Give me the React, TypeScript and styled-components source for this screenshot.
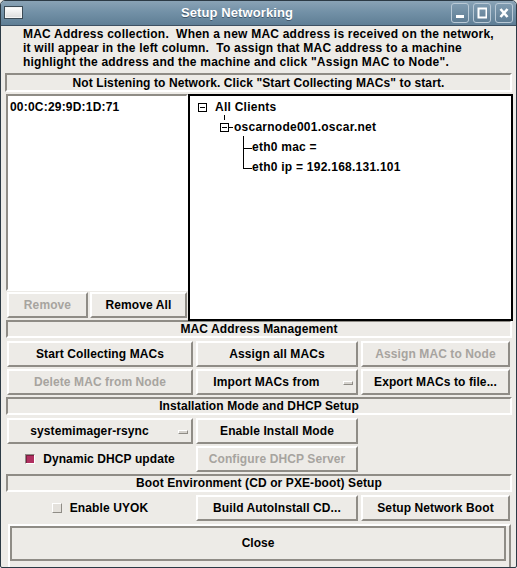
import React from "react";
import styled, { createGlobalStyle } from "styled-components";

const BG = "#edebe7";
const LIGHT = "#ffffff";
const SHADOW = "#8f8c86";
const DISABLED = "#a7a49f";
const FONT = `"Liberation Sans", Arial, Helvetica, sans-serif`;

const GlobalStyle = createGlobalStyle`
  html, body { margin: 0; padding: 0; background: ${BG}; }
  body { font-family: ${FONT}; }
  * { box-sizing: border-box; }
`;

const Window = styled.div`
  width: 517px;
  height: 568px;
  display: flex;
  flex-direction: column;
  background: ${BG};
  border: 1px solid #2c3a45;
  border-radius: 5px 5px 2px 2px;
  overflow: hidden;
`;

const TitleBar = styled.div`
  height: 25px;
  flex: none;
  display: flex;
  align-items: center;
  background: linear-gradient(#8aa3b6 0%, #7391a7 45%, #5f7e95 100%);
  border-bottom: 1px solid #3d5062;
  padding: 0 3px 0 3px;
`;

const AppIcon = styled.div`
  width: 19px;
  height: 13px;
  margin-top: -2px;
  border: 1px solid #3b4a55;
  background: linear-gradient(#ffffff, #dcdcdc);
  box-shadow: inset 0 0 0 1px #f4f4f4;
`;

const Title = styled.div`
  flex: 1;
  text-align: center;
  color: #ffffff;
  font: bold 13px ${FONT};
  letter-spacing: 0.1px;
  text-shadow: 0 1px 0 #3f566a;
  margin-top: -1px;
`;

const TitleButtons = styled.div`
  display: flex;
  gap: 4px;
  margin-top: -1px;
`;

const TitleButton = styled.div`
  width: 18px;
  height: 20px;
  border: 1px solid #b9c9d6;
  border-radius: 3px;
  background: linear-gradient(#7f9bb0, #5f7d94);
  display: flex;
  align-items: center;
  justify-content: center;
`;

const Body = styled.div`
  flex: 1;
  display: flex;
  flex-direction: column;
  padding: 0 3px 0 4px;
`;

const Intro = styled.div`
  margin: 1px 0 0 18px;
  font: bold 12px/14px ${FONT};
  letter-spacing: 0.22px;
  color: #000;
  white-space: pre;
`;

const Sunken = styled.div`
  border-style: solid;
  border-width: 2px;
  border-color: ${SHADOW} ${LIGHT} ${LIGHT} ${SHADOW};
`;

const StatusLabel = styled(Sunken)`
  margin: 4px 1px 0 0;
  height: 19px;
  display: flex;
  align-items: center;
  justify-content: center;
  font: bold 12px ${FONT};
  letter-spacing: 0.1px;
`;

const Middle = styled.div`
  margin-top: 1px;
  height: 227px;
  display: grid;
  grid-template-columns: 183px 1fr;
`;

const LeftColumn = styled.div`
  display: flex;
  flex-direction: column;
  padding: 1px 0 0 1px;
`;

const MacList = styled(Sunken)`
  height: 197px;
  background: #ffffff;
  padding: 4px 0 0 2px;
  font: bold 12px ${FONT};
  letter-spacing: 0.2px;
`;

const RemoveRow = styled.div`
  margin-top: 1px;
  display: grid;
  grid-template-columns: 81px 97px;
  gap: 2px;
  padding-left: 1px;
`;

const TreePanel = styled.div`
  position: relative;
  margin-top: 1px;
  height: 227px;
  border: 2px solid #000;
  background: #ffffff;
  padding-top: 1px;
`;

const TreeLines = styled.svg`
  position: absolute;
  left: 0;
  top: 0;
  pointer-events: none;
`;

const TreeRow = styled.div<{ $indent: number }>`
  height: 20px;
  display: flex;
  align-items: center;
  padding-left: ${(p) => p.$indent}px;
  font: bold 12px ${FONT};
  letter-spacing: 0.25px;
  white-space: pre;
`;

const SectionHeader = styled(Sunken)`
  margin: 0 1px 0 1px;
  height: 18px;
  display: flex;
  align-items: center;
  justify-content: center;
  font: bold 12px ${FONT};
  letter-spacing: 0.1px;
`;

const ButtonGrid = styled.div`
  display: grid;
  grid-template-columns: 186px 162px 149px;
  grid-auto-rows: 26px;
  column-gap: 3px;
  row-gap: 2px;
  margin: 3px 0 2px 2px;
`;

const Button = styled.div<{ $disabled?: boolean }>`
  height: 26px;
  background: ${BG};
  border-style: solid;
  border-width: 2px;
  border-color: ${LIGHT} ${SHADOW} ${SHADOW} ${LIGHT};
  display: flex;
  align-items: center;
  justify-content: center;
  font: bold 12px ${FONT};
  letter-spacing: 0.1px;
  color: ${(p) => (p.$disabled ? DISABLED : "#000")};
  white-space: nowrap;
`;

const MenuButton = styled(Button)`
  justify-content: flex-start;
  padding-right: 3px;
`;

const MenuText = styled.span`
  flex: 1;
  text-align: center;
`;

const MenuIndicator = styled.span`
  width: 10px;
  height: 4px;
  margin: 1px 0 0 8px;
  border-style: solid;
  border-width: 1px;
  border-color: ${LIGHT} ${SHADOW} ${SHADOW} ${LIGHT};
  background: #d6d3ce;
`;

const CheckCell = styled.div`
  display: flex;
  align-items: center;
  justify-content: center;
  gap: 8px;
  font: bold 12px ${FONT};
  letter-spacing: 0.1px;
`;

const CheckBox = styled.span<{ $checked?: boolean }>`
  width: 10px;
  height: 10px;
  border-style: solid;
  border-width: 1px;
  border-color: ${(p) =>
    p.$checked
      ? `${SHADOW} ${LIGHT} ${LIGHT} ${SHADOW}`
      : `${LIGHT} ${SHADOW} ${SHADOW} ${LIGHT}`};
  background: ${(p) => (p.$checked ? "#b03060" : "#e4e1dc")};
  box-shadow: ${(p) => (p.$checked ? `inset 1px 1px 0 #7a1f40` : "none")};
`;

const CloseRing = styled.div`
  margin: 1px 2px 0 3px;
  height: 45px;
  border-style: solid;
  border-width: 2px;
  border-color: ${LIGHT} ${SHADOW} ${SHADOW} ${LIGHT};
  padding: 0 3px 6px 0;
`;

const CloseButton = styled.div`
  height: 100%;
  border-style: solid;
  border-width: 2px;
  border-color: ${SHADOW};
  display: flex;
  align-items: center;
  justify-content: center;
  font: bold 12px ${FONT};
  padding-bottom: 1px;
`;

const Spacer = styled.div``;

const TreeDrawing = () => (
  <TreeLines width="321" height="100" viewBox="0 0 321 100">
    <g stroke="#000" strokeWidth="1" fill="none" shapeRendering="crispEdges">
      <rect x="8.5" y="7.5" width="8" height="8" fill="#fff" />
      <line x1="10" y1="11.5" x2="15" y2="11.5" />
      <line x1="34.5" y1="19" x2="34.5" y2="24" />
      <rect x="30.5" y="27.5" width="8" height="8" fill="#fff" />
      <line x1="32" y1="31.5" x2="37" y2="31.5" />
      <line x1="39" y1="31.5" x2="43" y2="31.5" />
      <line x1="53.5" y1="40" x2="53.5" y2="72" />
      <line x1="53" y1="52.5" x2="62" y2="52.5" />
      <line x1="53" y1="72.5" x2="62" y2="72.5" />
    </g>
  </TreeLines>
);

export default function App() {
  return (
    <>
      <GlobalStyle />
      <Window>
        <TitleBar>
          <AppIcon />
          <Title>Setup Networking</Title>
          <TitleButtons>
            <TitleButton>
              <svg width="10" height="12" viewBox="0 0 10 12">
                <rect x="1" y="8" width="8" height="3" fill="#fff" />
              </svg>
            </TitleButton>
            <TitleButton>
              <svg width="10" height="12" viewBox="0 0 10 12">
                <rect x="1.5" y="1.5" width="8" height="9" fill="none" stroke="#fff" strokeWidth="2" />
              </svg>
            </TitleButton>
            <TitleButton>
              <svg width="10" height="12" viewBox="0 0 10 12">
                <path d="M1.5 2 L8.5 10 M8.5 2 L1.5 10" stroke="#fff" strokeWidth="2.6" />
              </svg>
            </TitleButton>
          </TitleButtons>
        </TitleBar>
        <Body>
          <Intro>
            {"MAC Address collection.  When a new MAC address is received on the network,\nit will appear in the left column.  To assign that MAC address to a machine\nhighlight the address and the machine and click \"Assign MAC to Node\"."}
          </Intro>
          <StatusLabel>Not Listening to Network. Click "Start Collecting MACs" to start.</StatusLabel>
          <Middle>
            <LeftColumn>
              <MacList>00:0C:29:9D:1D:71</MacList>
              <RemoveRow>
                <Button $disabled>Remove</Button>
                <Button>Remove All</Button>
              </RemoveRow>
            </LeftColumn>
            <TreePanel>
              <TreeDrawing />
              <TreeRow $indent={25}>All Clients</TreeRow>
              <TreeRow $indent={44}>oscarnode001.oscar.net</TreeRow>
              <TreeRow $indent={62}>eth0 mac =</TreeRow>
              <TreeRow $indent={62}>eth0 ip = 192.168.131.101</TreeRow>
            </TreePanel>
          </Middle>
          <SectionHeader>MAC Address Management</SectionHeader>
          <ButtonGrid>
            <Button>Start Collecting MACs</Button>
            <Button>Assign all MACs</Button>
            <Button $disabled>Assign MAC to Node</Button>
            <Button $disabled>Delete MAC from Node</Button>
            <MenuButton>
              <MenuText>Import MACs from</MenuText>
              <MenuIndicator />
            </MenuButton>
            <Button>Export MACs to file...</Button>
          </ButtonGrid>
          <SectionHeader>Installation Mode and DHCP Setup</SectionHeader>
          <ButtonGrid>
            <MenuButton>
              <MenuText>systemimager-rsync</MenuText>
              <MenuIndicator />
            </MenuButton>
            <Button>Enable Install Mode</Button>
            <Spacer />
            <CheckCell>
              <CheckBox $checked />
              Dynamic DHCP update
            </CheckCell>
            <Button $disabled>Configure DHCP Server</Button>
            <Spacer />
          </ButtonGrid>
          <SectionHeader>Boot Environment (CD or PXE-boot) Setup</SectionHeader>
          <ButtonGrid>
            <CheckCell>
              <CheckBox />
              Enable UYOK
            </CheckCell>
            <Button>Build AutoInstall CD...</Button>
            <Button>Setup Network Boot</Button>
          </ButtonGrid>
          <CloseRing>
            <CloseButton>Close</CloseButton>
          </CloseRing>
        </Body>
      </Window>
    </>
  );
}
